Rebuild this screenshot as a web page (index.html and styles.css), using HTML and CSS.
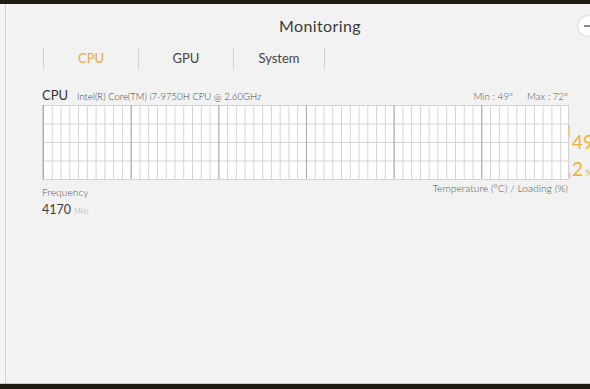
FILE: index.html
```html
<!DOCTYPE html>
<html>
<head>
<meta charset="utf-8">
<link rel="stylesheet" href="styles.css">
</head>
<body>
<div class="screen">
  <div class="topbar"></div>
  <div class="main">
    <div class="edge"></div>
    <div class="panel">
      <button class="min-btn" aria-label="minimize"><span class="dash"></span></button>
      <h1 class="title">Monitoring</h1>
      <nav class="tabs">
        <div class="tab active">CPU</div>
        <div class="tab">GPU</div>
        <div class="tab">System</div>
      </nav>
      <section class="cpu">
        <div class="head">
          <span class="name">CPU</span>
          <span class="model">Intel(R) Core(TM) i7-9750H CPU @ 2.60GHz</span>
          <span class="spacer"></span>
          <span class="stat">Min : 49º</span>
          <span class="stat">Max : 72º</span>
        </div>
        <div class="chart-row">
          <div class="chart">
            <svg class="trace" width="8" height="74" viewBox="0 0 8 74">
              <path d="M6.5 20 Q5 26 6.5 32" fill="none" stroke="#f3c15a" stroke-width="1.2"/>
              <path d="M6.5 68 L7 73" fill="none" stroke="#f3c15a" stroke-width="1.2"/>
            </svg>
          </div>
          <div class="readouts">
            <div class="read temp">49<span class="unit-big">°</span></div>
            <div class="read load">2<span class="unit">%</span></div>
          </div>
        </div>
        <div class="foot">
          <div class="freq">
            <div class="label">Frequency</div>
            <div class="value">4170 <span class="mhz">MHz</span></div>
          </div>
          <div class="caption">Temperature (°C) / Loading (%)</div>
        </div>
      </section>
    </div>
  </div>
  <div class="bottombar"></div>
</div>
</body>
</html>
```

FILE: styles.css
```css
* { box-sizing: border-box; }
html, body { margin: 0; padding: 0; }
body {
  width: 590px;
  height: 389px;
  overflow: hidden;
  font-family: Lato, "Noto Sans", "DejaVu Sans", sans-serif;
  font-weight: 300;
  background: #1e1b15;
}
.screen {
  width: 590px;
  height: 389px;
  display: flex;
  flex-direction: column;
  overflow: hidden;
}
.topbar { height: 4px; background: #1f1c16; flex: none; }
.bottombar { height: 6px; background: #1e1b14; flex: none; border-top: 1px solid #cfcfcf; }
.main {
  flex: 1;
  display: flex;
  overflow: hidden;
  background: #f2f2f2;
}
.edge {
  width: 7px;
  flex: none;
  background: linear-gradient(to right, #f6f6f6 0 5px, #cdcdcd 5px 6px, #fbfbfb 6px 7px);
}
.panel {
  position: relative;
  width: 626px;
  flex: none;
  background: #f2f2f2;
}
.min-btn {
  position: absolute;
  top: 12px;
  right: 35px;
  width: 20px;
  height: 20px;
  border-radius: 50%;
  border: none;
  padding: 0;
  background: #fff;
  box-shadow: 0 0 2px rgba(0,0,0,0.25);
  display: flex;
  align-items: center;
  justify-content: center;
}
.min-btn .dash { width: 9px; height: 1.5px; background: #8a8a8a; }
.title {
  margin: 12px 0 0;
  font-size: 16px;
  line-height: 20px;
  font-weight: 400;
  text-align: center;
  color: #3b3b3b;
  letter-spacing: 0.4px;
}
.tabs {
  display: flex;
  margin: 11px 0 0 36px;
  height: 23px;
}
.tab {
  width: 95px;
  height: 22px;
  border-left: 1px solid #d2d2d2;
  display: flex;
  align-items: center;
  justify-content: center;
  font-size: 13px;
  font-weight: 400;
  color: #444;
}
.tab:last-child { width: 92px; border-right: 1px solid #d2d2d2; }
.tab.active { color: #e9a646; }
.cpu { padding-left: 35px; }
.head {
  width: 526px;
  margin-top: 17px;
  height: 16px;
  display: flex;
  align-items: baseline;
  color: #333;
}
.name { font-size: 13px; line-height: 16px; margin-right: 9px; color: #333; font-weight: 400; }
.model { font-size: 9.5px; color: #444; }
.spacer { flex: 1; }
.stat { font-size: 9.8px; color: #555; margin-left: 14px; }
.chart-row {
  display: flex;
  margin-top: 2px;
  gap: 3px;
}
.chart {
  position: relative;
  width: 527px;
  height: 75px;
  flex: none;
  background-color: #fff;
  background-image:
    linear-gradient(to right, #a9a9a9 1px, transparent 1px),
    linear-gradient(to right, #d3d3d3 1px, transparent 1px),
    linear-gradient(to bottom, #d3d3d3 1px, transparent 1px);
  background-size: 87.67px 100%, 8.767px 100%, 100% 18.5px;
  background-position: 87.67px 0, 0 0, 0 0;
  border-left: 1px solid #d3d3d3;
  border-right: 1px solid #d3d3d3;
  border-bottom: 1px solid #d3d3d3;
}
.trace { position: absolute; right: -3px; top: 0; }
.readouts { display: flex; flex-direction: column; color: #f0b233; white-space: nowrap; }
.read { line-height: 20px; font-size: 19px; font-weight: 400; }
.temp { margin-top: 27px; }
.load { margin-top: 7px; }
.unit-big { font-size: 19px; }
.unit { font-size: 10px; margin-left: 2px; }
.foot {
  width: 526px;
  display: flex;
  justify-content: space-between;
  align-items: flex-start;
}
.freq { margin-top: 4px; }
.label { font-size: 10.3px; line-height: 12px; color: #555; }
.value { margin-top: 4px; font-size: 12.5px; line-height: 16px; color: #3a3a3a; font-weight: 400; }
.mhz { font-size: 7px; color: #aaa; font-weight: 300; }
.caption { margin-top: 0; font-size: 10.3px; line-height: 12px; color: #555; }
```
